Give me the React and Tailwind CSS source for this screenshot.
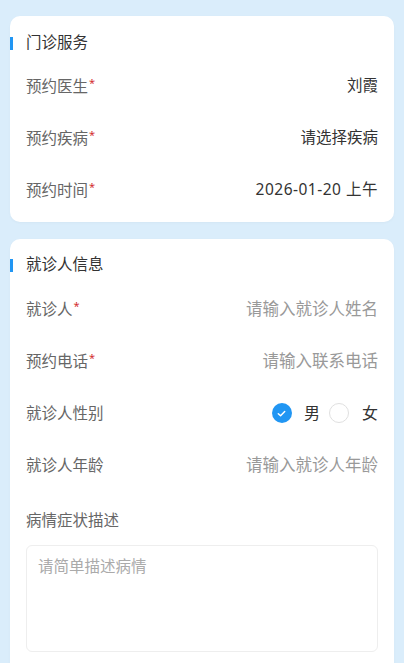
import { useState } from 'react';

const font = { fontFamily: '"Noto Sans", "Noto Sans CJK SC", sans-serif' };

function SectionTitle({ children }) {
  return (
    <div className="relative flex items-center h-[22px]">
      <span className="absolute left-0 top-[5px] w-[3px] h-[13px] bg-[#2196f3]" />
      <span className="pl-4 text-[15.5px] text-[#333]">{children}</span>
    </div>
  );
}

function Label({ text, required }) {
  return (
    <span className="text-[15.5px] text-[#666] leading-[22px]">
      {text}
      {required && <sup className="text-[#d32f2f] text-[11px] ml-[1px] top-[-5px]">*</sup>}
    </span>
  );
}

function Row({ label, required, children }) {
  return (
    <div className="flex items-center justify-between h-[52px] px-4">
      <Label text={label} required={required} />
      {children}
    </div>
  );
}

export default function App() {
  const [sex, setSex] = useState('男');

  return (
    <div className="min-h-[663px] bg-[#daedfb] px-[10px] pt-4 pb-4" style={font}>
      <div className="bg-white rounded-[10px] pt-4 pb-[6px] shadow-[0_1px_3px_rgba(0,0,0,0.03)]">
        <SectionTitle>门诊服务</SectionTitle>
        <div className="mt-[6px]">
          <Row label="预约医生" required>
            <span className="text-[15.5px] text-[#333]">刘霞</span>
          </Row>
          <Row label="预约疾病" required>
            <span className="text-[15.5px] text-[#333]">请选择疾病</span>
          </Row>
          <Row label="预约时间" required>
            <span className="text-[15.5px] text-[#333] tracking-[0.5px]">2026-01-20 上午</span>
          </Row>
        </div>
      </div>

      <div className="mt-[17px] bg-white rounded-[10px] pt-[15px] pb-4 shadow-[0_1px_3px_rgba(0,0,0,0.03)]">
        <SectionTitle>就诊人信息</SectionTitle>
        <div className="mt-[7px]">
          <Row label="就诊人" required>
            <span className="text-[16.5px] text-[#999]">请输入就诊人姓名</span>
          </Row>
          <Row label="预约电话" required>
            <span className="text-[16.5px] text-[#999]">请输入联系电话</span>
          </Row>
          <Row label="就诊人性别">
            <div className="flex items-center">
              {['男', '女'].map((s, i) => (
                <button
                  key={s}
                  onClick={() => setSex(s)}
                  className={`flex items-center ${i > 0 ? 'ml-[9px]' : ''}`}
                >
                  {sex === s ? (
                    <span className="w-5 h-5 rounded-full bg-[#2196f3] flex items-center justify-center">
                      <svg width="11" height="11" viewBox="0 0 12 12" fill="none">
                        <path d="M2.5 6.2 L5 8.5 L9.5 3.8" stroke="white" strokeWidth="1.6" strokeLinecap="round" strokeLinejoin="round" />
                      </svg>
                    </span>
                  ) : (
                    <span className="w-5 h-5 rounded-full border border-[#e0e0e0] bg-white" />
                  )}
                  <span className={`text-[16px] text-[#333] ${i > 0 ? 'ml-[13px]' : 'ml-3'}`}>{s}</span>
                </button>
              ))}
            </div>
          </Row>
          <Row label="就诊人年龄">
            <span className="text-[16.5px] text-[#999]">请输入就诊人年龄</span>
          </Row>
        </div>
        <div className="px-4 pt-[18px]">
          <div className="text-[15.5px] text-[#666] leading-[22px]">病情症状描述</div>
          <textarea
            placeholder="请简单描述病情"
            className="mt-[14px] w-full h-[107px] rounded-[6px] border border-[#eeeeee] px-[11px] py-[9px] text-[15.5px] text-[#333] placeholder:text-[#aaa] resize-none outline-none"
          />
        </div>
      </div>
    </div>
  );
}
